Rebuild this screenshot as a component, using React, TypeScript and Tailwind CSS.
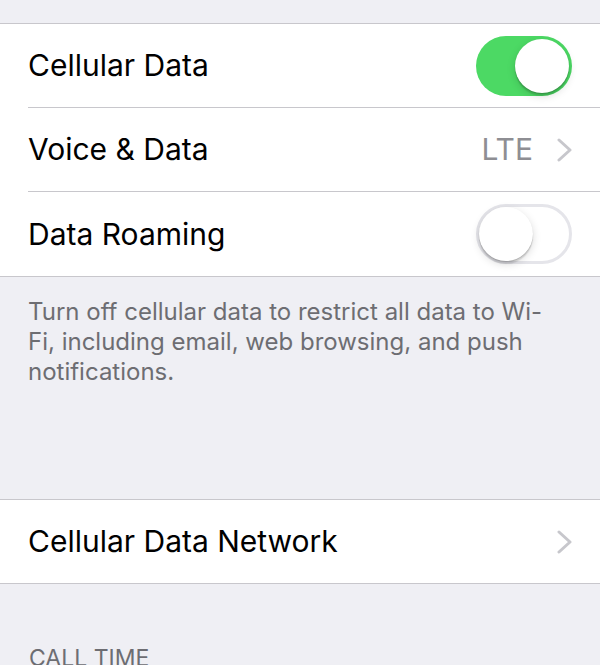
const font = { fontFamily: "Inter, 'Liberation Sans', sans-serif" };

function Toggle({ on }: { on: boolean }) {
  if (on) {
    return (
      <div className="relative h-[60px] w-[96px] rounded-full bg-[#4cd964]">
        <div className="absolute right-[3px] top-[3px] h-[54px] w-[54px] rounded-full bg-white shadow-[0_3px_8px_rgba(0,0,0,0.15),0_1px_1px_rgba(0,0,0,0.16),0_3px_1px_rgba(0,0,0,0.1)]" />
      </div>
    );
  }
  return (
    <div className="relative h-[60px] w-[96px] rounded-full border-[3px] border-[#e5e5ea] bg-white">
      <div className="absolute left-0 top-0 h-[54px] w-[54px] rounded-full bg-white shadow-[0_3px_8px_rgba(0,0,0,0.15),0_1px_1px_rgba(0,0,0,0.16),0_3px_1px_rgba(0,0,0,0.1)]" />
    </div>
  );
}

function Chevron() {
  return (
    <svg width="15" height="24" viewBox="0 0 15 24" fill="none">
      <polyline points="2,2 13,12 2,22" stroke="#c7c7cc" strokeWidth="3" strokeLinecap="round" strokeLinejoin="round" />
    </svg>
  );
}

function Row({ label, last, children }: { label: string; last?: boolean; children?: React.ReactNode }) {
  return (
    <div className="pl-[28px]">
      <div
        className={
          "flex h-[84px] items-center justify-between pr-[28px] " +
          (last ? "" : "border-b border-[#c8c7cc]")
        }
      >
        <span className="text-[30px] text-black">{label}</span>
        {children}
      </div>
    </div>
  );
}

export default function App() {
  return (
    <div className="h-[665px] w-[600px] overflow-hidden bg-[#efeff4]" style={font}>
      <div className="h-[23px]" />
      <div className="border-y border-[#c8c7cc] bg-white">
        <Row label="Cellular Data">
          <Toggle on />
        </Row>
        <Row label="Voice & Data">
          <div className="flex items-center gap-[24px]">
            <span className="text-[30px] text-[#8e8e93]">LTE</span>
            <Chevron />
          </div>
        </Row>
        <Row label="Data Roaming" last>
          <Toggle on={false} />
        </Row>
      </div>

      <p className="px-[28px] pt-[20px] text-[24px] leading-[30px] text-[#6d6d72]">
        Turn off cellular data to restrict all data to Wi-
        <br />
        Fi, including email, web browsing, and push notifications.
      </p>

      <div className="mt-[112px] border-y border-[#c8c7cc] bg-white">
        <div className="flex h-[83px] items-center justify-between pl-[28px] pr-[28px]">
          <span className="text-[30px] text-black">Cellular Data Network</span>
          <Chevron />
        </div>
      </div>

      <div className="px-[29px] pt-[59px] text-[23px] leading-[30px] text-[#6d6d72]">CALL TIME</div>
    </div>
  );
}
